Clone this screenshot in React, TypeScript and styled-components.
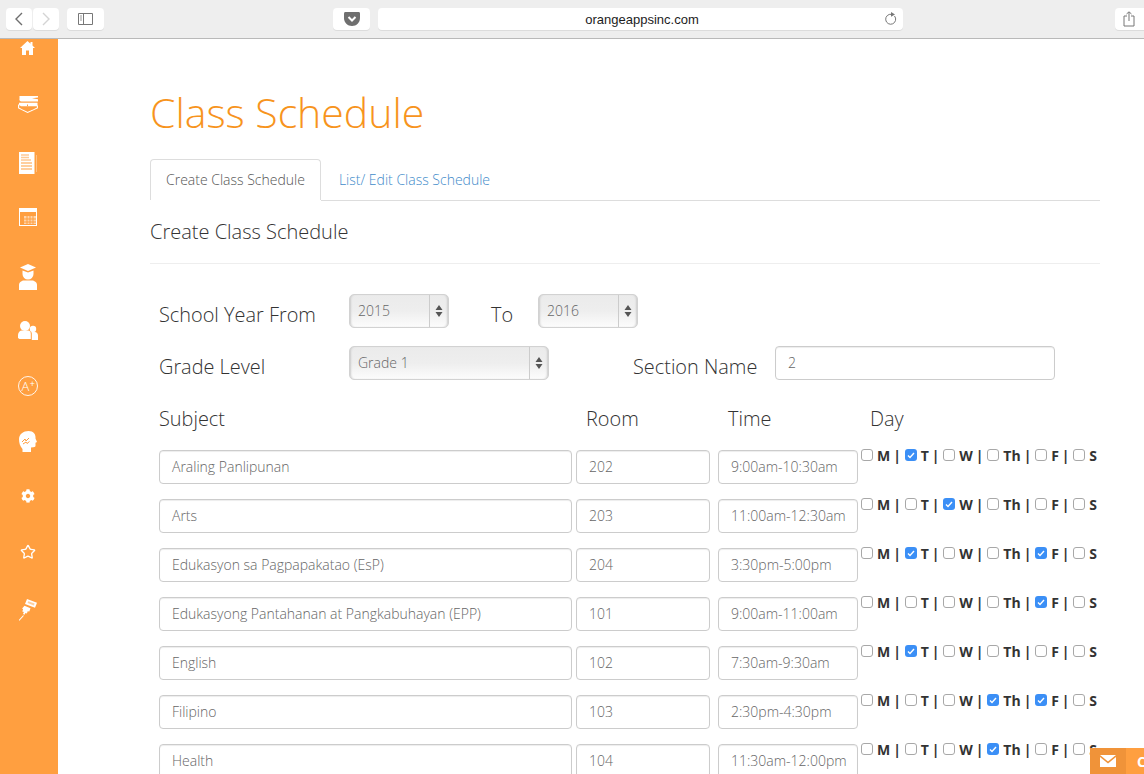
import React from "react";
import styled, { createGlobalStyle } from "styled-components";
import { FaCog } from "react-icons/fa";
import { Star } from "lucide-react";

const GlobalStyle = createGlobalStyle`
  html, body {
    margin: 0;
    padding: 0;
    height: 100%;
    overflow: hidden;
    background: #fff;
    font-family: "Open Sans", "Liberation Sans", sans-serif;
  }
  * { box-sizing: border-box; }
`;

const Page = styled.div`
  width: 1144px;
  height: 774px;
  display: flex;
  flex-direction: column;
  overflow: hidden;
  position: relative;
`;

/* browser chrome */
const Toolbar = styled.header`
  height: 39px;
  flex: none;
  display: flex;
  align-items: flex-start;
  padding: 8px 0 0 6px;
  background: #eeeeee;
  border-bottom: 1px solid #b9b9b9;
`;

const ChromeButton = styled.div<{ $w: number; $ml?: number }>`
  width: ${(p) => p.$w}px;
  margin-left: ${(p) => p.$ml ?? 0}px;
  height: 22px;
  flex: none;
  display: flex;
  align-items: center;
  justify-content: center;
  background: #fff;
  border-radius: 4px;
  box-shadow: 0 1px 0 #dcdcdc;
`;

const UrlBar = styled(ChromeButton)`
  position: relative;
  padding-left: 3px;
  font-family: "Liberation Sans", Arial, sans-serif;
  font-size: 13px;
  color: #1c1c1c;
`;

const ReloadSlot = styled.span`
  position: absolute;
  right: 6px;
  top: 4px;
  display: flex;
`;

const Body = styled.div`
  flex: 1;
  display: flex;
  min-height: 0;
`;

/* orange rail */
const Rail = styled.nav`
  width: 58px;
  flex: none;
  display: flex;
  flex-direction: column;
  align-items: center;
  background: #ff9f40;
  color: #fff;
`;

const RailItem = styled.div<{ $gap: number }>`
  height: 18px;
  margin-top: ${(p) => p.$gap}px;
  margin-left: -3px;
  display: flex;
  align-items: center;
  justify-content: center;
  flex: none;
`;

/* content */
const Main = styled.main`
  flex: 1;
  min-width: 0;
  padding: 0 44px 0 92px;
`;

const Title = styled.h1`
  margin: 44px 0 0;
  font-size: 41px;
  line-height: 58px;
  font-weight: 300;
  color: #f7941d;
`;

const Tabs = styled.div`
  display: flex;
  margin-top: 18px;
  height: 42px;
  border-bottom: 1px solid #dddddd;
`;

const Tab = styled.div<{ $active?: boolean }>`
  height: 41px;
  padding: 0 15px 1px ${(p) => (p.$active ? 15 : 17)}px;
  display: flex;
  align-items: center;
  font-size: 14px;
  font-weight: 300;
  color: ${(p) => (p.$active ? "#555555" : "#428bca")};
  border: 1px solid ${(p) => (p.$active ? "#dddddd" : "transparent")};
  border-bottom: none;
  box-shadow: ${(p) => (p.$active ? "0 1px 0 #fff" : "none")};
  background: ${(p) => (p.$active ? "#fff" : "transparent")};
  border-radius: 4px 4px 0 0;
`;

const SubHeading = styled.h2`
  margin: 0;
  height: 63px;
  padding-top: 16px;
  font-size: 20px;
  line-height: 30px;
  font-weight: 300;
  color: #333333;
  border-bottom: 1px solid #eeeeee;
`;

const Form = styled.div`
  padding: 30px 0 0 9px;
`;

const FormRow = styled.div<{ $h: number }>`
  display: flex;
  align-items: flex-start;
  height: ${(p) => p.$h}px;
`;

const Label = styled.div<{ $w: number; $ml?: number }>`
  width: ${(p) => p.$w}px;
  margin-left: ${(p) => p.$ml ?? 0}px;
  margin-top: 6px;
  flex: none;
  font-size: 19.9px;
  line-height: 30px;
  font-weight: 300;
  color: #333333;
`;

const Select = styled.div<{ $w: number }>`
  width: ${(p) => p.$w}px;
  height: 34px;
  flex: none;
  display: flex;
  border: 1px solid #d2d2d2;
  border-radius: 5px;
  background: linear-gradient(#ebebeb, #eeeeee 50%, #fcfcfc);
  box-shadow: inset 2px 0 2px -1px #cccccc, inset -2px 0 2px -1px #cccccc;
  font-size: 14px;
  font-weight: 300;
  color: #666666;
  line-height: 32px;
  padding-left: 8px;

  & > span:first-child {
    flex: 1;
  }
`;

const Arrows = styled.span`
  width: 19px;
  flex: none;
  display: flex;
  align-items: center;
  justify-content: center;
  border-left: 1px solid #cccccc;
`;

const Field = styled.div<{ $w: number; $ml?: number }>`
  width: ${(p) => p.$w}px;
  margin-left: ${(p) => p.$ml ?? 0}px;
  height: 34px;
  flex: none;
  padding: 0 0 0 12px;
  border: 1px solid #cccccc;
  border-radius: 4px;
  box-shadow: inset 0 1px 1px rgba(0, 0, 0, 0.075);
  font-size: 14px;
  line-height: 32px;
  font-weight: 300;
  color: #666666;
  white-space: nowrap;
  overflow: hidden;
  background: #fff;
`;

const TableRow = styled.div`
  display: flex;
  align-items: flex-start;
  height: 49px;
`;

const Days = styled.div`
  margin: -5px 0 0 3px;
  display: flex;
  align-items: center;
  flex: none;
  height: 20px;
  font-size: 14px;
  font-weight: 700;
  color: #333333;
  white-space: nowrap;
`;

const Box = styled.span<{ $on: boolean }>`
  width: 12px;
  height: 12px;
  flex: none;
  margin-right: 4px;
  display: flex;
  align-items: center;
  justify-content: center;
  border-radius: 3px;
  background: ${(p) => (p.$on ? "#3b8ff6" : "#fff")};
  border: ${(p) => (p.$on ? "none" : "1px solid #a8a8a8")};
`;

const Sep = styled.span`
  margin: 0 5.5px 0 3px;
  width: 6px;
  font-weight: 700;
`;

const Dock = styled.div`
  position: absolute;
  left: 1090px;
  top: 748px;
  width: 54px;
  height: 26px;
  display: flex;
  overflow: hidden;
  background: #ff9f40;
  color: #fff;
`;

const DockMail = styled.div`
  width: 36px;
  flex: none;
  display: flex;
  align-items: center;
  justify-content: center;
  background: #f09339;
`;

const DockText = styled.div`
  padding-left: 11px;
  font-size: 14px;
  font-weight: 700;
  line-height: 27px;
`;

const days = ["M", "T", "W", "Th", "F", "S"];

const rows = [
  { subject: "Araling Panlipunan", room: "202", time: "9:00am-10:30am", on: ["T"] },
  { subject: "Arts", room: "203", time: "11:00am-12:30am", on: ["W"] },
  { subject: "Edukasyon sa Pagpapakatao (EsP)", room: "204", time: "3:30pm-5:00pm", on: ["T", "F"] },
  { subject: "Edukasyong Pantahanan at Pangkabuhayan (EPP)", room: "101", time: "9:00am-11:00am", on: ["F"] },
  { subject: "English", room: "102", time: "7:30am-9:30am", on: ["T"] },
  { subject: "Filipino", room: "103", time: "2:30pm-4:30pm", on: ["Th", "F"] },
  { subject: "Health", room: "104", time: "11:30am-12:00pm", on: ["Th"] },
];

const HomeIcon = () => (
  <svg width="15" height="14" viewBox="0 0 15 14">
    <path d="M7.500 0l3 2.800V1h2v3.600L15 7h-2v7H9V9.500H6V14H2V7H0z" fill="#fff" />
  </svg>
);

const BooksIcon = () => (
  <svg width="20" height="17" viewBox="0 0 20 17" fill="none">
    <path d="M1.500 0H20v1.500l-6 .8 6 1V5.500H3.500C1.800 5.500 1 4 1.500 2.500z" fill="#fff" />
    <path d="M1 6.800h18.500v3.400H3L1 9z" fill="#fff" />
    <path d="M9.500 8.500v1.700" stroke="#ff9f40" />
    <path d="M.6 8.500v3.500l9 4.400 9.800-4.400V9.500" stroke="#fff" strokeWidth="1.100" />
    <path d="M3 12.500l6.600 2.300 7-2.300" stroke="#ff9f40" strokeWidth=".8" opacity=".6" />
  </svg>
);

const DocIcon = () => (
  <svg width="18" height="22" viewBox="0 0 18 22">
    <path d="M0 0h15.500v22H0z" fill="#fff" />
    <path d="M17 3h1v17h-1z" fill="#fff" opacity=".35" />
    <path d="M2 3h8M2 5.500h8M2 8h10" stroke="#ff9f40" strokeWidth="1.300" opacity=".55" />
    <path d="M2 11h11M2 14h11M2 17h11" stroke="#ff9f40" strokeWidth="1.100" />
  </svg>
);

const CalendarIcon = () => (
  <svg width="18" height="18" viewBox="0 0 18 18">
    <path d="M0 0h18v18H0z" fill="#fff" />
    <path d="M1 4h16v13H1z" fill="#ff9f40" />
    <path d="M5 8h12v8H5z" fill="#fff" opacity=".55" />
    <path d="M8 8v8M11 8v8M14 8v8M5 11h12M5 14h12" stroke="#ff9f40" strokeWidth="1" />
  </svg>
);

const GraduateIcon = () => (
  <svg width="18" height="26" viewBox="0 0 18 26">
    <path d="M1 3.500L9 0l8 3.500L9 7z" fill="#fff" />
    <path d="M3.500 6.500L9 8.500l5.500-2v3.500a5.500 5.500 0 0 1-11 0z" fill="#fff" />
    <path d="M0 26v-5c0-3 3-4.500 5-4.500h8c2 0 5 1.500 5 4.500v5z" fill="#fff" />
  </svg>
);

const UsersIcon = () => (
  <svg width="20" height="19" viewBox="0 0 20 19">
    <circle cx="7" cy="5" r="5" fill="#fff" />
    <path d="M0 17v-3C0 11.500 2 9.500 4 9.500h6c2 0 2.800 1.500 2.800 3.500v5H1.500z" fill="#fff" />
    <circle cx="15" cy="8" r="3.200" fill="#fff" />
    <path d="M13.800 19v-6c0-.8 0-1.500-.5-2h3.500c1.700 0 3.200 1.500 3.200 3.500V19z" fill="#fff" />
  </svg>
);

const GradeIcon = () => (
  <svg width="20" height="20" viewBox="0 0 20 20" fill="none">
    <circle cx="10" cy="10" r="9.500" stroke="#fff" strokeWidth=".9" />
    <text x="3.500" y="15" fontSize="13" fontWeight="300" fill="#fff" fontFamily="Open Sans, sans-serif">A</text>
    <text x="11.800" y="11" fontSize="9" fontWeight="400" fill="#fff" fontFamily="Open Sans, sans-serif">+</text>
  </svg>
);

const HeadIcon = () => (
  <svg width="18" height="21" viewBox="0 0 18 21">
    <path d="M0 8C0 3 4.500 0 9.500 0S17 3.500 16.500 7.500l1.500 3.500-1.500.8v3c0 1.200-1 1.700-4.500 1.700V21H3.500v-3C1 15 0 12 0 8z" fill="#fff" />
    <path d="M3 11l3-3 1 2 3-3M4 13l3-2 1 1.500 2.500-2" stroke="#ff9f40" strokeWidth="1" fill="none" />
  </svg>
);

const PinIcon = () => (
  <svg width="18" height="22" viewBox="0 0 18 22">
    <path d="M8 0l10 3.800-2 5L6 5z" fill="#fff" />
    <path d="M9.300 2.200l6.300 2.400-.7 1.800-6.300-2.400z" fill="#ff9f40" opacity=".5" />
    <path d="M5.500 6.800l6 2.400-1.200 3.200-1.600-.2-.8 2.200-1.400-.5-1 1.900-1.500-.7.9-2-1.600-.7.800-2.100-1-.7z" fill="#fff" />
    <path d="M4.500 16.500L0 21.500" stroke="#fff" strokeWidth="1.100" />
  </svg>
);

const railItems = [
  { key: "home", gap: 0, icon: <HomeIcon /> },
  { key: "books", gap: 38, icon: <BooksIcon /> },
  { key: "doc", gap: 41, icon: <DocIcon /> },
  { key: "calendar", gap: 36, icon: <CalendarIcon /> },
  { key: "graduate", gap: 42, icon: <GraduateIcon /> },
  { key: "users", gap: 35, icon: <UsersIcon /> },
  { key: "grade", gap: 38, icon: <GradeIcon /> },
  { key: "head", gap: 37, icon: <HeadIcon /> },
  { key: "gear", gap: 37, icon: <FaCog size={14} /> },
  { key: "star", gap: 38, icon: <Star size={16} strokeWidth={2} /> },
  { key: "pin", gap: 40, icon: <PinIcon /> },
];

const SpinArrows = () => (
  <svg width="8" height="14" viewBox="0 0 8 14">
    <path d="M4 1l3.500 5h-7zM4 13L.5 8h7z" fill="#555" />
  </svg>
);

const FakeSelect = ({ value, w }: { value: string; w: number }) => (
  <Select $w={w}>
    <span>{value}</span>
    <Arrows>
      <SpinArrows />
    </Arrows>
  </Select>
);

export default function App() {
  return (
    <Page>
      <GlobalStyle />
      <Toolbar>
        <ChromeButton $w={26}>
          <svg width="10" height="14" viewBox="0 0 10 14" fill="none">
            <path d="M8 1L2 7l6 6" stroke="#6e6e6e" strokeWidth="1.400" />
          </svg>
        </ChromeButton>
        <ChromeButton $w={26} $ml={1}>
          <svg width="10" height="14" viewBox="0 0 10 14" fill="none">
            <path d="M2 1l6 6-6 6" stroke="#d4d4d4" strokeWidth="1.400" />
          </svg>
        </ChromeButton>
        <ChromeButton $w={37} $ml={8}>
          <svg width="15" height="12" viewBox="0 0 15 12" fill="none">
            <path d="M.5.500h14v11H.5zM5.500.500v11" stroke="#777" />
            <path d="M2 3h2M2 5h2M2 7h2" stroke="#999" />
          </svg>
        </ChromeButton>
        <ChromeButton $w={37} $ml={229}>
          <svg width="16" height="14" viewBox="0 0 16 14">
            <path d="M1.500 0h13C15.500 0 16 .6 16 1.500V6c0 4.500-3.500 8-8 8S0 10.500 0 6V1.500C0 .6.500 0 1.500 0z" fill="#6f6f6f" />
            <path d="M4.500 5L8 8.500 11.500 5" stroke="#fff" strokeWidth="2" fill="none" />
          </svg>
        </ChromeButton>
        <UrlBar $w={525} $ml={8}>
          orangeappsinc.com
          <ReloadSlot>
            <svg width="13" height="14" viewBox="0 0 13 14" fill="none">
              <path d="M10.500 4a5 5 0 1 1-3-1.700" stroke="#777" />
              <path d="M7 0l4 2.500-4 2.300z" fill="#777" />
            </svg>
          </ReloadSlot>
        </UrlBar>
        <ChromeButton $w={40} $ml={212}>
          <svg width="12" height="16" viewBox="0 0 12 16" fill="none" style={{ marginRight: 12 }}>
            <path d="M4 5H1v10h10V5H8M6 10V1M3.500 3L6 .8 8.500 3" stroke="#777" />
          </svg>
        </ChromeButton>
      </Toolbar>
      <Body>
        <Rail>
          {railItems.map((item) => (
            <RailItem key={item.key} $gap={item.gap}>
              {item.icon}
            </RailItem>
          ))}
        </Rail>
        <Main>
          <Title>Class Schedule</Title>
          <Tabs>
            <Tab $active>Create Class Schedule</Tab>
            <Tab>List/ Edit Class Schedule</Tab>
          </Tabs>
          <SubHeading>Create Class Schedule</SubHeading>
          <Form>
            <FormRow $h={52}>
              <Label $w={190}>School Year From</Label>
              <FakeSelect value="2015" w={100} />
              <Label $w={47} $ml={42}>To</Label>
              <FakeSelect value="2016" w={100} />
            </FormRow>
            <FormRow $h={52}>
              <Label $w={190}>Grade Level</Label>
              <FakeSelect value="Grade 1" w={200} />
              <Label $w={142} $ml={84}>Section Name</Label>
              <Field $w={280}>2</Field>
            </FormRow>
            <FormRow $h={52}>
              <Label $w={427}>Subject</Label>
              <Label $w={142}>Room</Label>
              <Label $w={142}>Time</Label>
              <Label $w={60}>Day</Label>
            </FormRow>
            {rows.map((row) => (
              <TableRow key={row.subject}>
                <Field $w={413}>{row.subject}</Field>
                <Field $w={134} $ml={4}>{row.room}</Field>
                <Field $w={140} $ml={8}>{row.time}</Field>
                <Days>
                  {days.map((d, i) => {
                    const on = row.on.includes(d);
                    return (
                      <React.Fragment key={d}>
                        <Box $on={on}>
                          {on && (
                            <svg width="8" height="7" viewBox="0 0 8 7" fill="none">
                              <path d="M1 3.500l2 2 4-4.500" stroke="#fff" strokeWidth="1.400" />
                            </svg>
                          )}
                        </Box>
                        <span>{d}</span>
                        {i < days.length - 1 && <Sep>|</Sep>}
                      </React.Fragment>
                    );
                  })}
                </Days>
              </TableRow>
            ))}
          </Form>
        </Main>
      </Body>
      <Dock>
        <DockMail>
          <svg width="16" height="12" viewBox="0 0 16 12">
            <path d="M0 0h16L8 6.500zM0 2l8 6.500L16 2v10H0z" fill="#fff" />
          </svg>
        </DockMail>
        <DockText>Chat</DockText>
      </Dock>
    </Page>
  );
}
